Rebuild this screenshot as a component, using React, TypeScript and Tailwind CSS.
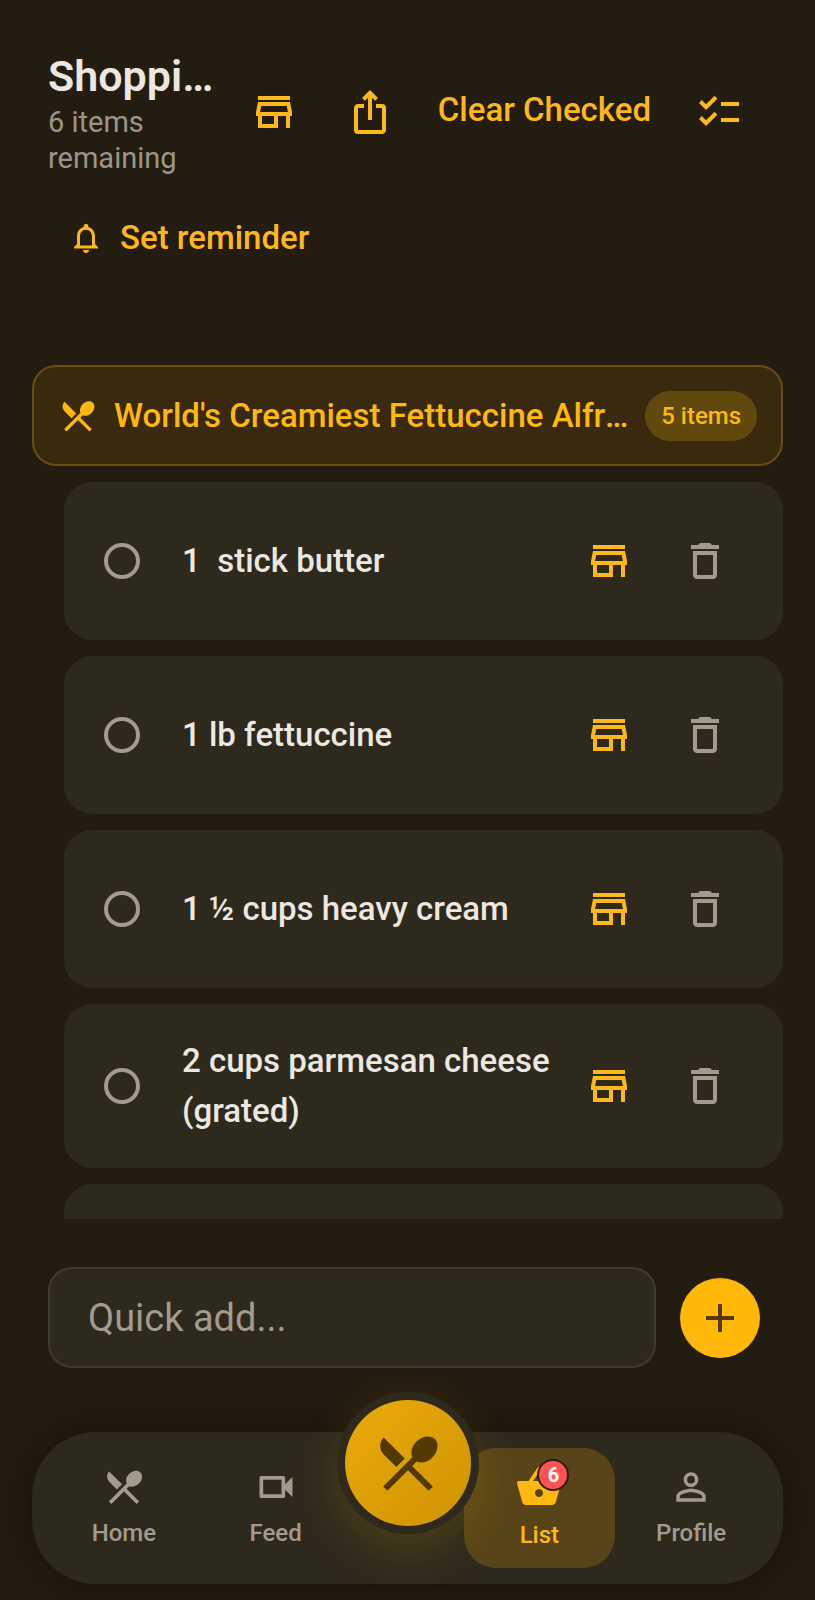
import React, { useState } from 'react';
import {
  MdAdd,
  MdChecklist,
  MdDeleteOutline,
  MdIosShare,
  MdNotificationsNone,
  MdOutlineStore,
  MdOutlineVideocam,
  MdPersonOutline,
  MdRestaurantMenu,
  MdShoppingBasket,
} from 'react-icons/md';

const initialItems = [
  { id: 'butter', label: '1  stick butter', checked: false },
  { id: 'fettuccine', label: '1 lb fettuccine', checked: false },
  { id: 'cream', label: '1 ½ cups heavy cream', checked: false },
  { id: 'parmesan', label: '2 cups parmesan cheese (grated)', checked: false },
  { id: 'pepper', label: '', checked: false },
];

const iconButton = 'flex size-24 shrink-0 items-center justify-center rounded-full';
const navItem = 'flex h-[120px] min-w-0 flex-1 flex-col items-center justify-center gap-1.5 rounded-[32px] text-[#a29b8e]';
const navLabel = 'text-[24px] leading-9 font-medium';

export default function App() {
  const [items, setItems] = useState(initialItems);
  const [draft, setDraft] = useState('');

  const toggleItem = (id: string) => {
    setItems(items.map((item) => (item.id === id ? { ...item, checked: !item.checked } : item)));
  };

  const removeItem = (id: string) => {
    setItems(items.filter((item) => item.id !== id));
  };

  const handleAdd = (e: React.FormEvent) => {
    e.preventDefault();
    if (!draft.trim()) return;
    setItems([...items, { id: String(Date.now()), label: draft.trim(), checked: false }]);
    setDraft('');
  };

  return (
    <div className="flex h-screen flex-col overflow-hidden bg-[#231c10] font-[Roboto,sans-serif] text-[#ece7e1]">
      {/* Header */}
      <header className="shrink-0 px-12 pt-12 pb-[89px]">
        <div className="flex items-center">
          <div className="min-w-0 flex-1">
            <h1 className="truncate text-[43px] leading-[56px] font-semibold">Shopping List</h1>
            <p className="text-[29px] leading-9 text-[#9c9589]">6 items remaining</p>
          </div>
          <div className="flex shrink-0 items-center text-[#ffb81c]">
            <button type="button" aria-label="Find in store" className={iconButton}>
              <MdOutlineStore className="size-12" />
            </button>
            <button type="button" aria-label="Share list" className={iconButton}>
              <MdIosShare className="size-12" />
            </button>
            <button
              type="button"
              onClick={() => setItems(items.filter((item) => !item.checked))}
              className="px-5 pb-1 text-[33px] leading-10 font-medium"
            >
              Clear Checked
            </button>
            <button type="button" aria-label="Select items" className={iconButton}>
              <MdChecklist className="size-12" />
            </button>
          </div>
        </div>
        <button type="button" className="mt-6 flex h-[76px] items-center gap-4 px-5 text-[33px] font-medium text-[#ffb81c]">
          <MdNotificationsNone className="size-9" />
          Set reminder
        </button>
      </header>

      {/* Items grouped by recipe */}
      <main className="min-h-0 flex-1 overflow-y-auto px-8 [scrollbar-width:none]">
        <div className="flex h-[101px] items-center rounded-3xl border-2 border-[#6a4d10] bg-[#39290f] px-6 text-[#ffb80f]">
          <MdRestaurantMenu className="mr-4 size-10 shrink-0" />
          <h2 className="min-w-0 flex-1 truncate text-[33px] leading-10 font-medium">
            World's Creamiest Fettuccine Alfredo
          </h2>
          <span className="ml-3 shrink-0 rounded-full bg-[#61480d] px-4 text-[24px] leading-[50px] font-medium">5 items</span>
        </div>

        <ul className="mt-4 ml-8 flex flex-col gap-4">
          {items.map((item) => (
            <li
              key={item.id}
              className="flex min-h-[158px] items-center rounded-[28px] bg-[#2d291c] py-8 pr-[30px] pl-10"
            >
              <input
                id={item.id}
                type="checkbox"
                aria-label={item.label || 'Item'}
                checked={item.checked}
                onChange={() => toggleItem(item.id)}
                className="mr-[42px] size-9 shrink-0 appearance-none rounded-full border-4 border-[#a29b8e] checked:bg-[#ffb80f]"
              />
              <label htmlFor={item.id} className="min-w-0 flex-1 text-[33px] leading-[50px] font-medium whitespace-pre-wrap">
                {item.label}
              </label>
              <button type="button" aria-label="Find in store" className="flex h-12 w-24 shrink-0 items-center justify-center text-[#ffb81c]">
                <MdOutlineStore className="size-12" />
              </button>
              <button
                type="button"
                aria-label="Remove item"
                onClick={() => removeItem(item.id)}
                className="flex h-12 w-24 shrink-0 items-center justify-center text-[#a29b8e]"
              >
                <MdDeleteOutline className="size-12" />
              </button>
            </li>
          ))}
        </ul>
      </main>

      {/* Quick add */}
      <form onSubmit={handleAdd} className="flex shrink-0 items-center gap-6 pt-12 pr-[55px] pb-16 pl-12">
        <input
          type="text"
          aria-label="Quick add"
          placeholder="Quick add..."
          value={draft}
          onChange={(e) => setDraft(e.target.value)}
          className="h-[101px] min-w-0 flex-1 rounded-3xl border-2 border-[#403b2e] bg-[#2d291c] px-[38px] text-[38px] outline-none placeholder:text-[#a29b8e]"
        />
        <button
          type="submit"
          aria-label="Add item"
          className="flex size-20 shrink-0 items-center justify-center rounded-full bg-[#ffb80a] text-[#543a00]"
        >
          <MdAdd className="size-12" />
        </button>
      </form>

      {/* Bottom navigation */}
      <nav className="relative mx-8 mb-4 flex h-[152px] shrink-0 items-center rounded-[64px] bg-[#2d291c] px-4 shadow-[0_0_40px_rgba(0,0,0,0.4)]">
        <a href="#home" className={navItem}>
          <MdRestaurantMenu className="size-11" />
          <span className={navLabel}>Home</span>
        </a>
        <a href="#feed" className={navItem}>
          <MdOutlineVideocam className="size-11" />
          <span className={navLabel}>Feed</span>
        </a>
        <div className="w-28 shrink-0" />
        <a
          href="#list"
          aria-current="page"
          className="flex h-[120px] min-w-0 flex-1 flex-col items-center justify-center gap-1.5 rounded-[32px] bg-[#574418] text-[#ffb80f]"
        >
          <span className="relative">
            <MdShoppingBasket className="size-12" />
            <span className="absolute -top-1 -right-1.5 flex size-8 items-center justify-center rounded-full border-2 border-[#2d1f14] bg-[#ff5252] text-[20px] leading-none font-bold text-white">
              6
            </span>
          </span>
          <span className={navLabel}>List</span>
        </a>
        <a href="#profile" className={navItem}>
          <MdPersonOutline className="size-11" />
          <span className={navLabel}>Profile</span>
        </a>

        <button
          type="button"
          aria-label="Cook"
          className="absolute -top-10 left-1/2 flex size-[142px] -translate-x-1/2 items-center justify-center rounded-full bg-[#2d2a1c] shadow-[0_16px_48px_rgba(255,184,0,0.16)]"
        >
          <span className="flex size-[126px] items-center justify-center rounded-full bg-linear-to-br from-[#eaab08] to-[#cf9305] text-[#523900]">
            <MdRestaurantMenu className="size-[72px]" />
          </span>
        </button>
      </nav>
    </div>
  );
}
